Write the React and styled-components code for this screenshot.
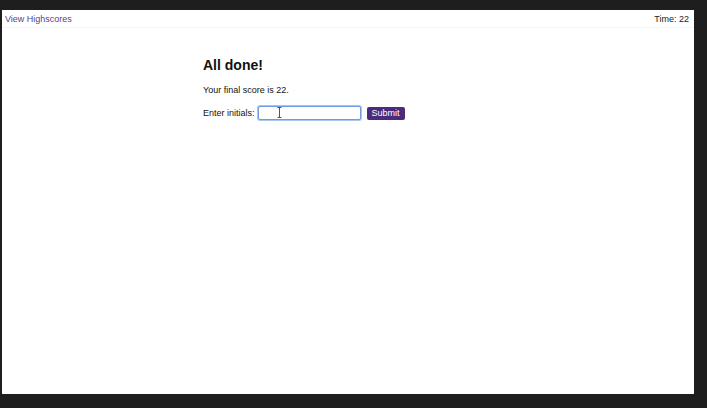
import styled, { createGlobalStyle } from "styled-components";

const GlobalStyle = createGlobalStyle`
  html, body {
    margin: 0;
    padding: 0;
    background: #1e1e1e;
  }
  body {
    font-family: "Liberation Sans", Arial, sans-serif;
  }
`;

const Frame = styled.div`
  margin: 10px 13px 0 2px;
  height: 384px;
  background: #ffffff;
  display: flex;
  flex-direction: column;
  overflow: hidden;
`;

const Header = styled.header`
  display: flex;
  justify-content: space-between;
  align-items: center;
  height: 17px;
  padding: 0 5px 0 3px;
  font-size: 9px;
  border-bottom: 1px solid #f8f6f9;
  margin-bottom: 29px;
`;

const HighscoreLink = styled.a`
  color: #5b3f8c;
  text-decoration: none;
`;

const Timer = styled.span`
  color: #222;
`;

const Card = styled.section`
  width: 290px;
  margin: 0 auto;
  color: #111;
`;

const Title = styled.h1`
  font-size: 14px;
  font-weight: bold;
  margin: 0 0 12px;
  line-height: 16px;
`;

const Score = styled.p`
  font-size: 9px;
  margin: 0 0 11px;
`;

const Form = styled.form`
  display: flex;
  align-items: center;
  gap: 6px;
  font-size: 9px;
`;

const Label = styled.label`
  margin-right: -3px;
`;

const InputWrap = styled.div`
  position: relative;
`;

const Input = styled.input`
  width: 99px;
  height: 10px;
  border: 1px solid #6f9be0;
  border-radius: 2px;
  box-shadow: 0 0 0 1px #a9c6f1;
  outline: none;
  padding: 1px;
  font-size: 9px;
  display: block;
`;

const Cursor = styled.svg`
  position: absolute;
  left: 19px;
  top: 1px;
`;

const Button = styled.button`
  background: #4c2b7c;
  color: #fff;
  border: none;
  border-radius: 2px;
  font-family: inherit;
  font-size: 9px;
  height: 13px;
  padding: 0 5px;
  line-height: 13px;
`;

export default function App() {
  return (
    <>
      <GlobalStyle />
      <Frame>
        <Header>
          <HighscoreLink href="#">View Highscores</HighscoreLink>
          <Timer>Time: 22</Timer>
        </Header>
        <Card>
          <Title>All done!</Title>
          <Score>Your final score is 22.</Score>
          <Form onSubmit={(e) => e.preventDefault()}>
            <Label>Enter initials:</Label>
            <InputWrap>
              <Input />
              <Cursor width="5" height="11" viewBox="0 0 5 11">
                <path d="M0.5 0.5h4M0.5 10.5h4M2.5 0.5v10" stroke="#555" strokeWidth="1" fill="none" />
              </Cursor>
            </InputWrap>
            <Button type="submit">Submit</Button>
          </Form>
        </Card>
      </Frame>
    </>
  );
}
